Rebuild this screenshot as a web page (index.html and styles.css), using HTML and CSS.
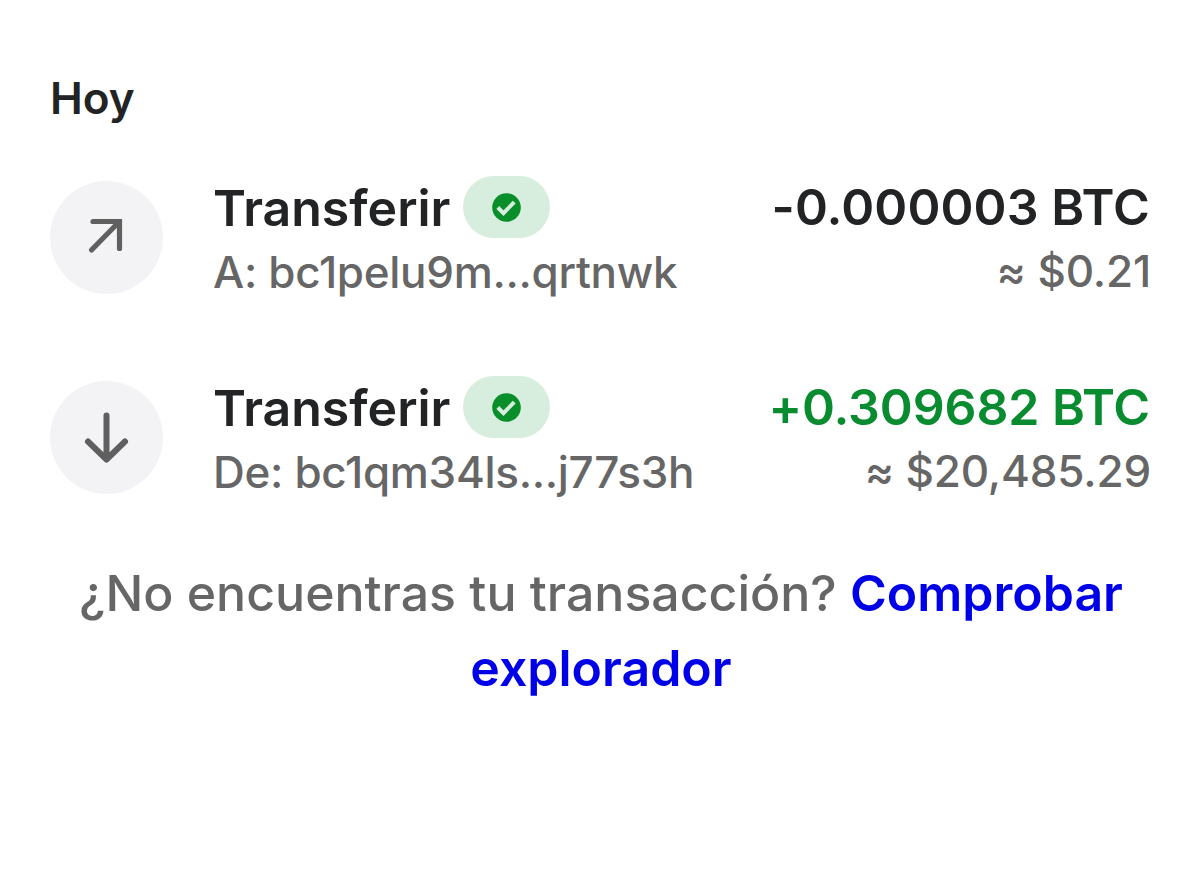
FILE: index.html
```html
<!DOCTYPE html>
<html lang="es">
<head>
  <meta charset="UTF-8">
  <title>Actividad</title>
  <link rel="stylesheet" href="styles.css">
</head>
<body>
  <main class="activity">
    <h2 class="date">Hoy</h2>

    <ul class="tx-list">
      <li class="tx">
        <div class="tx-icon">
          <svg width="113" height="113" viewBox="0 0 113 113" fill="none" stroke="#5f5f5f" stroke-width="5.200" stroke-linecap="round">
            <path d="M41.500 69L68 42"/>
            <path d="M43 40.500H69.500V67.500" stroke-linejoin="miter"/>
          </svg>
        </div>
        <div class="tx-info">
          <div class="tx-title">
            <span class="tx-name">Transferir</span>
            <span class="badge">
              <svg width="29" height="29" viewBox="0 0 29 29">
                <circle cx="14.500" cy="14.500" r="14.300" fill="#098f2a"/>
                <path d="M5.800 14.500l5.700 5.700 10.700-11" fill="none" stroke="#d7eddd" stroke-width="3.900"/>
              </svg>
            </span>
          </div>
          <div class="tx-address">A: bc1pelu9m...qrtnwk</div>
        </div>
        <div class="tx-value">
          <div class="amount">-0.000003 BTC</div>
          <div class="fiat">≈ $0.21</div>
        </div>
      </li>

      <li class="tx">
        <div class="tx-icon">
          <svg width="113" height="113" viewBox="0 0 113 113" fill="none" stroke="#5f5f5f" stroke-width="6" stroke-linecap="round" stroke-linejoin="round">
            <path d="M56.500 34.500V78.500M38 60.500L56.500 78.500L75 60.500"/>
          </svg>
        </div>
        <div class="tx-info">
          <div class="tx-title">
            <span class="tx-name">Transferir</span>
            <span class="badge">
              <svg width="29" height="29" viewBox="0 0 29 29">
                <circle cx="14.500" cy="14.500" r="14.300" fill="#098f2a"/>
                <path d="M5.800 14.500l5.700 5.700 10.700-11" fill="none" stroke="#d7eddd" stroke-width="3.900"/>
              </svg>
            </span>
          </div>
          <div class="tx-address">De: bc1qm34ls...j77s3h</div>
        </div>
        <div class="tx-value">
          <div class="amount received">+0.309682 BTC</div>
          <div class="fiat">≈ $20,485.29</div>
        </div>
      </li>
    </ul>

    <p class="help">¿No encuentras tu transacción? <a class="help-link" href="#">Comprobar explorador</a></p>
  </main>
</body>
</html>
```

FILE: styles.css
```css
body {
  margin: 0;
  background: #fff;
  color: #222325;
  font-family: 'Inter', sans-serif;
}

.activity {
  padding: 71px 50px 0;
}

.date {
  margin: 0;
  font-size: 44px;
  font-weight: 600;
  line-height: 54px;
}

.tx-list {
  list-style: none;
  margin: 51px 0 0;
  padding: 0;
}

.tx {
  display: flex;
  height: 200px;
}

.tx-icon {
  width: 113px;
  height: 113px;
  margin-top: 5px;
  border-radius: 50%;
  background: #f3f3f6;
}

.tx-icon svg {
  display: block;
}

.tx-info {
  margin-left: 50px;
}

.tx-title {
  display: flex;
  align-items: flex-start;
  gap: 13px;
  height: 63px;
}

.tx-name {
  font-size: 50px;
  font-weight: 600;
  line-height: 65px;
}

/* Confirmed status pill */
.badge {
  display: flex;
  align-items: center;
  justify-content: center;
  width: 87px;
  height: 62px;
  border-radius: 31px;
  background: #d7eddd;
}

.tx-address,
.fiat {
  color: #666;
  font-size: 44px;
  font-weight: 500;
  line-height: 66px;
}

.tx-address {
  letter-spacing: -0.3px;
}

.tx-value {
  margin-left: auto;
  text-align: right;
}

.fiat {
  margin-right: -1px;
  letter-spacing: -0.15px;
}

.amount {
  font-size: 50px;
  font-weight: 600;
  letter-spacing: 0.1px;
  line-height: 62px;
}

.received {
  color: #098c30;
  letter-spacing: -0.1px;
}

.help {
  margin: -20px -1px 0 1px;
  color: #666;
  font-size: 50px;
  font-weight: 500;
  line-height: 75px;
  text-align: center;
}

.help-link {
  color: #0000e8;
  font-weight: 600;
  text-decoration: none;
}
```
